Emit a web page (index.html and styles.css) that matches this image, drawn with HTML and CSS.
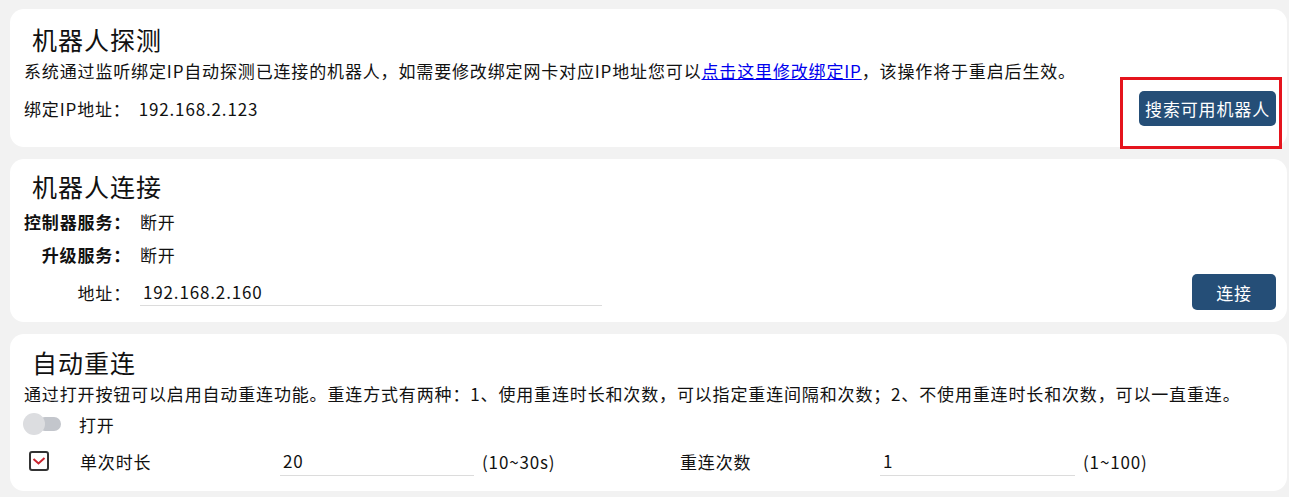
FILE: index.html
```html
<!DOCTYPE html>
<html lang="zh-CN">
<head>
  <meta charset="UTF-8" />
  <meta name="viewport" content="width=device-width, initial-scale=1" />
  <title>机器人连接</title>
  <link rel="stylesheet" href="styles.css">
</head>
<body>

  <div class="section detect">
    <h3>机器人探测</h3>
    <p class="desc">系统通过监听绑定IP自动探测已连接的机器人，如需要修改绑定网卡对应IP地址您可以<a href="#">点击这里修改绑定IP</a>，该操作将于重启后生效。</p>
    <div class="row-between">
      <div class="bind-ip">
        <span class="bind-label">绑定IP地址：</span>
        <span>192.168.2.123</span>
      </div>
      <span class="marked">
        <button>搜索可用机器人</button>
      </span>
    </div>
  </div>

  <div class="section connect">
    <h3>机器人连接</h3>
    <div class="info-row">
      <label class="strong">控制器服务：</label>
      <span>断开</span>
    </div>
    <div class="info-row">
      <label class="strong">升级服务：</label>
      <span>断开</span>
    </div>
    <div class="info-row addr-row">
      <label>地址：</label>
      <input type="text" class="addr" value="192.168.2.160">
      <button class="btn-connect">连接</button>
    </div>
  </div>

  <div class="section reconnect">
    <h3>自动重连</h3>
    <p class="desc">通过打开按钮可以启用自动重连功能。重连方式有两种：1、使用重连时长和次数，可以指定重连间隔和次数；2、不使用重连时长和次数，可以一直重连。</p>
    <div class="switch-row">
      <span class="switch"></span>
      <span>打开</span>
    </div>
    <div class="limit-row">
      <span class="check">
        <svg width="14" height="10" viewBox="0 0 14 10"><polyline points="1.5,3 6.5,7.5 12.5,2" fill="none" stroke="#c9252f" stroke-width="2"/></svg>
      </span>
      <span>单次时长</span>
      <input type="text" class="num" value="20">
      <span>(10~30s)</span>
      <span>重连次数</span>
      <input type="text" class="num" value="1">
      <span>(1~100)</span>
    </div>
  </div>

</body>
</html>
```

FILE: styles.css
```css
body {
  margin: 0;
  padding: 9px 2px 5px 10px;
  background: #f2f2f2;
  font-family: "Noto Sans CJK SC", "Noto Sans", sans-serif;
  font-size: 17px;
  letter-spacing: 0.85px;
  color: #111;
}
h3 {
  margin: 0 0 0 8px;
  font-size: 25px;
  font-weight: 400;
  line-height: 30px;
  letter-spacing: 1px;
}
p {
  margin: 0;
}
.section {
  background: #fff;
  border-radius: 14px;
  padding: 0 11px 0 14px;
  margin-bottom: 12px;
}
.desc {
  margin-top: 5px;
  line-height: 24px;
}
.desc a {
  color: #0000ee;
}
button {
  background: #254e77;
  color: #fff;
  border: none;
  border-radius: 5px;
  font: inherit;
  letter-spacing: inherit;
  cursor: pointer;
}

/* robot detect */
.detect {
  padding-top: 15px;
  padding-bottom: 21px;
}
.row-between {
  margin-top: 8px;
  display: flex;
  justify-content: space-between;
  align-items: center;
}
.bind-label {
  display: inline-block;
  width: 110px;
}
.marked {
  position: relative;
}
.marked button {
  height: 35px;
  padding: 0 6px;
}
.marked::after {
  content: "";
  position: absolute;
  left: -19px;
  right: -6px;
  top: -14px;
  bottom: -23px;
  border: 3px solid #e5141d;
  pointer-events: none;
}

/* robot connect */
.connect {
  padding-top: 12px;
  padding-bottom: 12px;
}
.info-row {
  display: flex;
  align-items: center;
  height: 30px;
  margin-top: 3px;
}
.connect h3 + .info-row {
  margin-top: 5px;
}
.info-row label {
  width: 107px;
  margin-right: 9px;
  text-align: right;
  white-space: nowrap;
}
.info-row .strong {
  font-weight: 700;
}
.addr-row {
  height: 36px;
  margin-top: 5px;
}
input {
  font: inherit;
  letter-spacing: inherit;
  color: #111;
  border: none;
  border-bottom: 1px solid #dcdcdc;
  outline: none;
  background: transparent;
  height: 28px;
  box-sizing: border-box;
  padding: 0 3px;
}
.addr {
  width: 462px;
}
.btn-connect {
  margin-left: auto;
  width: 84px;
  height: 36px;
}

/* auto reconnect */
.reconnect {
  padding-top: 13px;
  padding-bottom: 15px;
  margin-bottom: 0;
}
.switch-row {
  margin-top: 5px;
  height: 26px;
  display: flex;
  align-items: center;
  gap: 18px;
}
.switch {
  position: relative;
  width: 38px;
  height: 14px;
  margin-left: -1px;
}
.switch::before {
  content: "";
  position: absolute;
  left: 15px;
  right: 0;
  top: 0;
  bottom: 0;
  background: #c3c6cc;
  border-radius: 7px;
}
.switch::after {
  content: "";
  position: absolute;
  left: 0;
  top: -4px;
  width: 22px;
  height: 22px;
  border-radius: 50%;
  background: #dcdde0;
}
.limit-row {
  margin-top: 9px;
  height: 30px;
  display: grid;
  grid-template-columns: 56px 200px 194px 206px 200px 195px auto;
  align-items: center;
}
.limit-row span {
  white-space: nowrap;
}
.limit-row span:nth-of-type(3),
.limit-row span:nth-of-type(5) {
  padding-left: 8px;
}
.limit-row .num {
  width: 100%;
  height: 30px;
}
.check {
  width: 20px;
  height: 20px;
  box-sizing: border-box;
  border: 2px solid #333;
  border-radius: 3px;
  margin-left: 5px;
  display: flex;
  align-items: center;
  justify-content: center;
}
```
